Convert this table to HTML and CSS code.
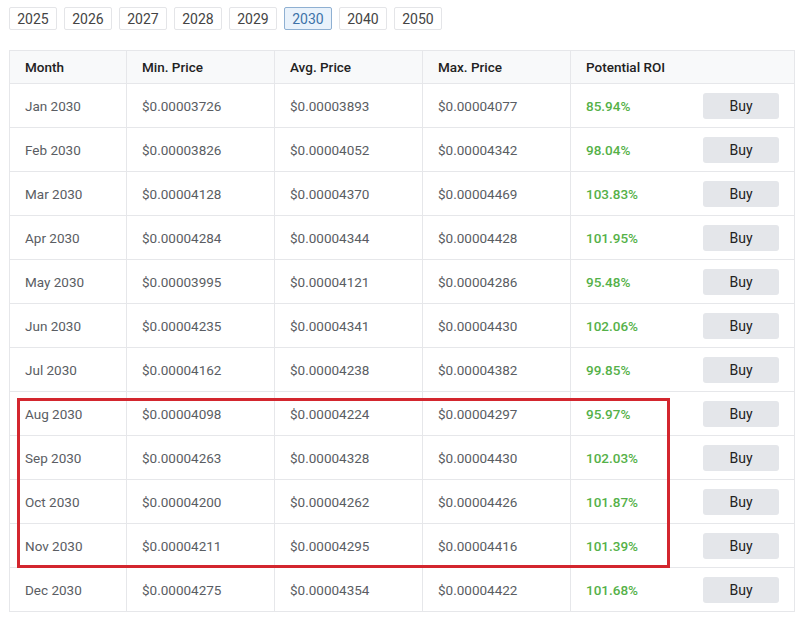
FILE: index.html
```html
<!DOCTYPE html>
<html lang="en">
<head>
  <meta charset="UTF-8">
  <title>Price Prediction 2030</title>
  <link rel="stylesheet" href="styles.css">
</head>
<body>
  <div class="page">
    <div class="years">
      <button class="year">2025</button>
      <button class="year">2026</button>
      <button class="year">2027</button>
      <button class="year">2028</button>
      <button class="year">2029</button>
      <button class="year active">2030</button>
      <button class="year">2040</button>
      <button class="year">2050</button>
    </div>

    <div class="table-wrap">
      <table class="prices">
        <thead>
          <tr>
            <th class="c-month">Month</th>
            <th class="c-price">Min. Price</th>
            <th class="c-price">Avg. Price</th>
            <th class="c-price">Max. Price</th>
            <th class="c-roi">Potential ROI</th>
            <th class="c-buy"></th>
          </tr>
        </thead>
        <tbody>
          <tr><td>Jan 2030</td><td>$0.00003726</td><td>$0.00003893</td><td>$0.00004077</td><td class="roi">85.94%</td><td class="buy-cell"><button class="buy">Buy</button></td></tr>
          <tr><td>Feb 2030</td><td>$0.00003826</td><td>$0.00004052</td><td>$0.00004342</td><td class="roi">98.04%</td><td class="buy-cell"><button class="buy">Buy</button></td></tr>
          <tr><td>Mar 2030</td><td>$0.00004128</td><td>$0.00004370</td><td>$0.00004469</td><td class="roi">103.83%</td><td class="buy-cell"><button class="buy">Buy</button></td></tr>
          <tr><td>Apr 2030</td><td>$0.00004284</td><td>$0.00004344</td><td>$0.00004428</td><td class="roi">101.95%</td><td class="buy-cell"><button class="buy">Buy</button></td></tr>
          <tr><td>May 2030</td><td>$0.00003995</td><td>$0.00004121</td><td>$0.00004286</td><td class="roi">95.48%</td><td class="buy-cell"><button class="buy">Buy</button></td></tr>
          <tr><td>Jun 2030</td><td>$0.00004235</td><td>$0.00004341</td><td>$0.00004430</td><td class="roi">102.06%</td><td class="buy-cell"><button class="buy">Buy</button></td></tr>
          <tr><td>Jul 2030</td><td>$0.00004162</td><td>$0.00004238</td><td>$0.00004382</td><td class="roi">99.85%</td><td class="buy-cell"><button class="buy">Buy</button></td></tr>
          <tr><td>Aug 2030</td><td>$0.00004098</td><td>$0.00004224</td><td>$0.00004297</td><td class="roi">95.97%</td><td class="buy-cell"><button class="buy">Buy</button></td></tr>
          <tr><td>Sep 2030</td><td>$0.00004263</td><td>$0.00004328</td><td>$0.00004430</td><td class="roi">102.03%</td><td class="buy-cell"><button class="buy">Buy</button></td></tr>
          <tr><td>Oct 2030</td><td>$0.00004200</td><td>$0.00004262</td><td>$0.00004426</td><td class="roi">101.87%</td><td class="buy-cell"><button class="buy">Buy</button></td></tr>
          <tr><td>Nov 2030</td><td>$0.00004211</td><td>$0.00004295</td><td>$0.00004416</td><td class="roi">101.39%</td><td class="buy-cell"><button class="buy">Buy</button></td></tr>
          <tr><td>Dec 2030</td><td>$0.00004275</td><td>$0.00004354</td><td>$0.00004422</td><td class="roi">101.68%</td><td class="buy-cell"><button class="buy">Buy</button></td></tr>
        </tbody>
      </table>
      <div class="highlight"></div>
    </div>
  </div>
</body>
</html>
```

FILE: styles.css
```css
:root {
  --line: #e6e7ea;
  --head-bg: #f8f9fa;
  --text: #222;
  --muted: #5a5d63;
  --green: #55b148;
  --mark: #d3262e;
}

body {
  margin: 0;
  background: #fff;
  font-family: Roboto, 'Liberation Sans', sans-serif;
  color: var(--text);
}

.page {
  padding: 7px 5px 0 9px;
}

.years {
  display: flex;
  gap: 7px;
}
.year {
  width: 48px;
  height: 23px;
  padding: 0;
  background: #fff;
  border: 1px solid #e4e5e8;
  border-radius: 2px;
  font-family: inherit;
  font-size: 14px;
  color: #444;
}
.year.active {
  background: #e9f2fb;
  border-color: #8fb0d2;
  color: #3d72a8;
}

.table-wrap {
  position: relative;
  margin-top: 20px;
  width: 786px;
}
.prices {
  width: 100%;
  border-collapse: collapse;
  table-layout: fixed;
  font-size: 13.5px;
}
.prices th,
.prices td {
  border: 1px solid var(--line);
  text-align: left;
  padding: 0 0 0 15px;
}
.prices th {
  height: 32px;
  background: var(--head-bg);
  font-weight: 500;
  color: var(--text);
}
.prices td {
  height: 43px;
  color: var(--muted);
}
.c-month { width: 101px; }
.c-price { width: 132px; }
.c-roi { width: 117px; }
.prices th.c-roi,
.prices td.roi { border-right: none; }
.prices th.c-buy,
.prices td.buy-cell { border-left: none; text-align: right; padding: 0 16px 0 0; }

.prices td.roi {
  color: var(--green);
  font-weight: 500;
}

.buy {
  width: 76px;
  height: 26px;
  background: #e4e6ea;
  border: none;
  border-radius: 3px;
  font-family: inherit;
  font-size: 14px;
  color: #222;
  vertical-align: middle;
}

.highlight {
  position: absolute;
  left: 8px;
  top: 348px;
  width: 647px;
  height: 164px;
  border: 3px solid var(--mark);
}
```
